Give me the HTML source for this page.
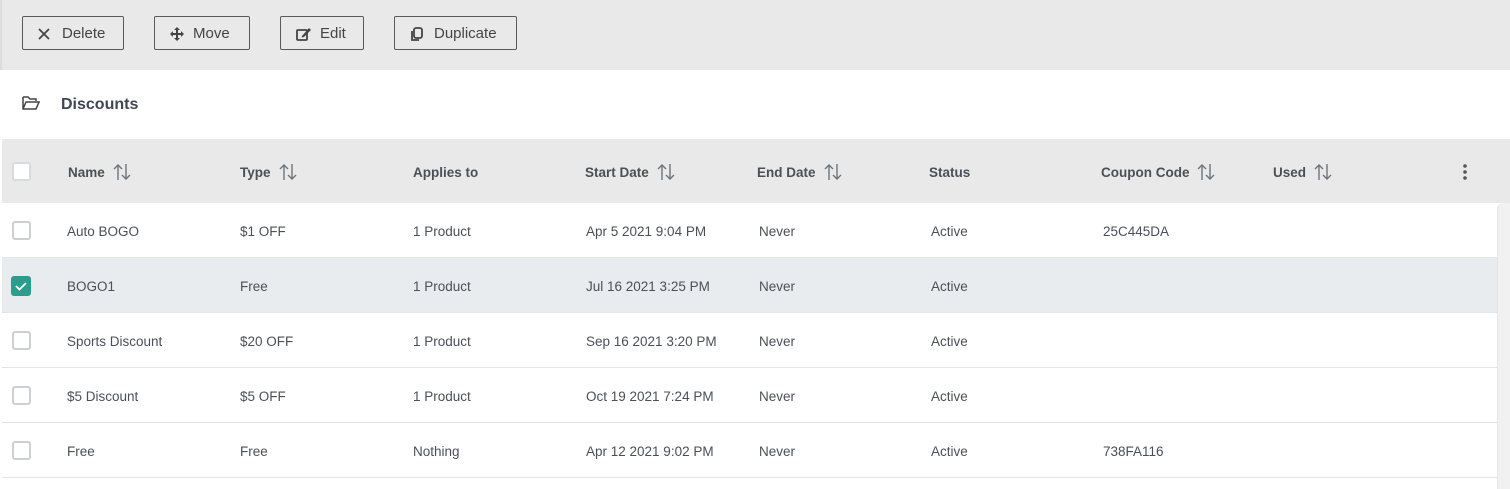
<!DOCTYPE html>
<html><head><style>
*{box-sizing:border-box;margin:0;padding:0}
body{width:1510px;height:489px;overflow:hidden;background:#fff;font-family:"Liberation Sans",sans-serif;color:#495057;position:relative}
.tb{position:absolute;left:0;top:0;width:1510px;height:70px;background:#e9e9e9;border-left:2px solid #ddd}
.btn{position:absolute;top:16px;height:34px;border:1px solid #5a5a5a;border-radius:2px;font-size:15px;color:#444;line-height:32px;padding-left:14px}
.btn svg{position:absolute;top:10px;left:15px}
.btn span{position:absolute;left:39px;top:1px}
.title{position:absolute;left:61px;top:96px;font-size:16px;font-weight:bold;color:#3f4752}
.hdr{position:absolute;left:2px;top:139px;width:1508px;height:64px;background:#e9e9e9}
.h{position:absolute;top:165px;font-size:13.5px;font-weight:bold;color:#495057}
.h svg{vertical-align:middle;margin-left:8px;margin-top:-3px}
.row{position:absolute;left:2px;width:1495px;height:55px;border-bottom:1px solid #e4e4e4}
.c{position:absolute;font-size:13.5px;color:#495057}
.cb{position:absolute;left:12px;width:19px;height:19px;border:2px solid #ccd0d5;border-radius:3px;background:#fff}
.sb{position:absolute;left:1497px;top:203px;width:13px;height:286px;background:#f1f1f1;border-left:1px solid #e6e6e6;border-radius:6px 0 0 0}
</style></head><body>
<div class="tb"></div>
<div class="btn" style="left:22px;width:102px"><svg width="12" height="14" viewBox="0 0 12 14"><path d="M1 2L11 12M11 2L1 12" stroke="#444" stroke-width="1.8"/></svg><span>Delete</span></div>
<div class="btn" style="left:154px;width:96px"><svg width="14" height="14" viewBox="0 0 14 14"><path d="M7 0L4 3H10ZM7 14L4 11H10ZM0 7L3 4V10ZM14 7L11 4V10Z" fill="#444"/><path d="M7 2V12M2 7H12" stroke="#444" stroke-width="2"/></svg><span style="left:38px">Move</span></div>
<div class="btn" style="left:280px;width:84px"><svg width="16" height="14" viewBox="0 0 16 14"><rect x="1" y="3" width="10" height="10" rx="1" fill="none" stroke="#444" stroke-width="1.8"/><path d="M6 9L13 1L15 3L8 10L5.5 10.5Z" fill="#444"/></svg><span>Edit</span></div>
<div class="btn" style="left:394px;width:123px"><svg width="14" height="15" viewBox="0 0 14 15"><rect x="4" y="1" width="8" height="10" rx="2" fill="none" stroke="#444" stroke-width="1.8"/><path d="M2 4V13H9" fill="none" stroke="#444" stroke-width="1.8"/></svg><span>Duplicate</span></div>
<svg style="position:absolute;left:22px;top:96px" width="18" height="14" viewBox="0 0 18 14"><path d="M1 1H6L8 3H14V5M1 1V13H14L17 6H4L1 13" fill="none" stroke="#444" stroke-width="1.5"/></svg>
<div class="title">Discounts</div>
<div class="hdr"></div>
<div class="cb" style="top:162px;border-color:#d8dbe0"></div>
<div class="h" style="left:68px">Name<svg width="18" height="18" viewBox="0 0 18 18"><path d="M5 17V2M1 6L5 2L9 6M13 1V16M9 12L13 16L17 12" fill="none" stroke="#6c757d" stroke-width="1.4"/></svg></div>
<div class="h" style="left:240px">Type<svg width="18" height="18" viewBox="0 0 18 18"><path d="M5 17V2M1 6L5 2L9 6M13 1V16M9 12L13 16L17 12" fill="none" stroke="#6c757d" stroke-width="1.4"/></svg></div>
<div class="h" style="left:413px">Applies to</div>
<div class="h" style="left:585px">Start Date<svg width="18" height="18" viewBox="0 0 18 18"><path d="M5 17V2M1 6L5 2L9 6M13 1V16M9 12L13 16L17 12" fill="none" stroke="#6c757d" stroke-width="1.4"/></svg></div>
<div class="h" style="left:757px">End Date<svg width="18" height="18" viewBox="0 0 18 18"><path d="M5 17V2M1 6L5 2L9 6M13 1V16M9 12L13 16L17 12" fill="none" stroke="#6c757d" stroke-width="1.4"/></svg></div>
<div class="h" style="left:929px">Status</div>
<div class="h" style="left:1101px">Coupon Code<svg width="18" height="18" viewBox="0 0 18 18"><path d="M5 17V2M1 6L5 2L9 6M13 1V16M9 12L13 16L17 12" fill="none" stroke="#6c757d" stroke-width="1.4"/></svg></div>
<div class="h" style="left:1273px">Used<svg width="18" height="18" viewBox="0 0 18 18"><path d="M5 17V2M1 6L5 2L9 6M13 1V16M9 12L13 16L17 12" fill="none" stroke="#6c757d" stroke-width="1.4"/></svg></div>
<svg style="position:absolute;left:1462px;top:163px" width="6" height="18" viewBox="0 0 6 18"><circle cx="3" cy="3" r="1.8" fill="#555"/><circle cx="3" cy="9" r="1.8" fill="#555"/><circle cx="3" cy="15" r="1.8" fill="#555"/></svg>

<div class="row" style="top:203px"></div>
<div class="row" style="top:258px;background:#e9ecef"></div>
<div class="row" style="top:313px"></div>
<div class="row" style="top:368px"></div>
<div class="row" style="top:423px"></div>

<div class="cb" style="top:221px"></div>
<div style="position:absolute;left:11px;top:276px;width:20px;height:20px;background:#2a9d8f;border-radius:3px"><svg width="20" height="20" viewBox="0 0 20 20"><path d="M5 10L8.5 13.5L15 7" fill="none" stroke="#fff" stroke-width="1.8"/></svg></div>
<div class="cb" style="top:331px"></div>
<div class="cb" style="top:386px"></div>
<div class="cb" style="top:441px"></div>

<div class="c" style="left:67px;top:224px">Auto BOGO</div><div class="c" style="left:240px;top:224px">$1 OFF</div><div class="c" style="left:413px;top:224px">1 Product</div><div class="c" style="left:586px;top:224px">Apr 5 2021 9:04 PM</div><div class="c" style="left:759px;top:224px">Never</div><div class="c" style="left:931px;top:224px">Active</div><div class="c" style="left:1103px;top:224px">25C445DA</div>
<div class="c" style="left:67px;top:279px">BOGO1</div><div class="c" style="left:240px;top:279px">Free</div><div class="c" style="left:413px;top:279px">1 Product</div><div class="c" style="left:586px;top:279px">Jul 16 2021 3:25 PM</div><div class="c" style="left:759px;top:279px">Never</div><div class="c" style="left:931px;top:279px">Active</div>
<div class="c" style="left:67px;top:334px">Sports Discount</div><div class="c" style="left:240px;top:334px">$20 OFF</div><div class="c" style="left:413px;top:334px">1 Product</div><div class="c" style="left:586px;top:334px">Sep 16 2021 3:20 PM</div><div class="c" style="left:759px;top:334px">Never</div><div class="c" style="left:931px;top:334px">Active</div>
<div class="c" style="left:67px;top:389px">$5 Discount</div><div class="c" style="left:240px;top:389px">$5 OFF</div><div class="c" style="left:413px;top:389px">1 Product</div><div class="c" style="left:586px;top:389px">Oct 19 2021 7:24 PM</div><div class="c" style="left:759px;top:389px">Never</div><div class="c" style="left:931px;top:389px">Active</div>
<div class="c" style="left:67px;top:444px">Free</div><div class="c" style="left:240px;top:444px">Free</div><div class="c" style="left:413px;top:444px">Nothing</div><div class="c" style="left:586px;top:444px">Apr 12 2021 9:02 PM</div><div class="c" style="left:759px;top:444px">Never</div><div class="c" style="left:931px;top:444px">Active</div><div class="c" style="left:1103px;top:444px">738FA116</div>
<div class="sb"></div>
</body></html>
